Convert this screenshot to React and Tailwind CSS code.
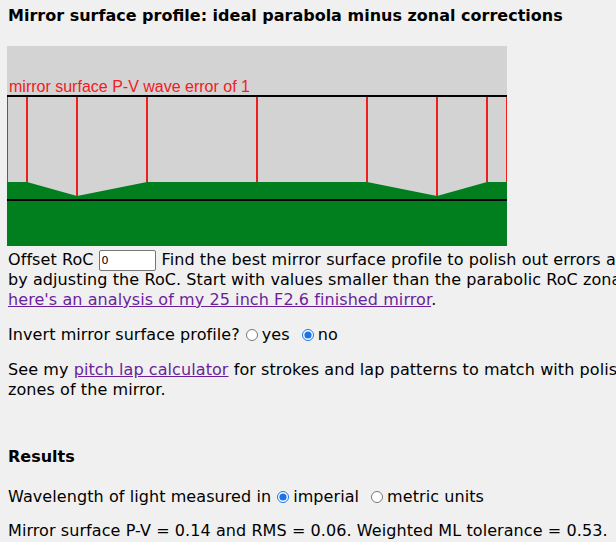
import { useState } from "react";

const lines = [0, 20, 70, 140, 250, 360, 430, 480, 500];
const dips = { 70: 150, 430: 150 };

const SurfaceChart = () => (
  <svg width="500" height="200" className="block">
    <rect x="0" y="0" width="500" height="200" fill="#d3d3d3" />
    <polygon
      points="0,136 20,136 70,150 140,136 360,136 430,150 480,136 500,136 500,200 0,200"
      fill="#017f1f"
    />
    <line x1="0" y1="50" x2="500" y2="50" stroke="#000" strokeWidth="2" />
    <line x1="0" y1="154" x2="500" y2="154" stroke="#000" strokeWidth="2" />
    {lines.map((x) => (
      <line
        key={x}
        x1={x === 0 ? 0.5 : x === 500 ? 499.5 : x}
        y1="51"
        x2={x === 0 ? 0.5 : x === 500 ? 499.5 : x}
        y2={dips[x] || 136}
        stroke="#f01d1d"
        strokeWidth={x === 0 || x === 500 ? 1 : 2}
      />
    ))}
    <text x="2" y="46" fill="#f02020" fontSize="16" fontFamily="'Liberation Sans', Arial, sans-serif">
      mirror surface P-V wave error of 1
    </text>
  </svg>
);

const Radio = ({ name, label, checked, onChange }) => (
  <label className="inline-flex items-center mr-[6px]">
    <input
      type="radio"
      name={name}
      checked={checked}
      onChange={onChange}
      className="w-[12px] h-[12px] m-0 ml-[6px] mr-[4px] accent-[#1a73e8]"
    />
    {label}
  </label>
);

export default function App() {
  const [invert, setInvert] = useState("no");
  const [units, setUnits] = useState("imperial");

  return (
    <div
      className="w-[616px] h-[542px] overflow-hidden bg-[#f0f0f0] text-black text-[16px] leading-[20px]"
      style={{ fontFamily: "'DejaVu Sans', Verdana, sans-serif" }}
    >
      <div className="px-2 w-[800px]">
        <h3 className="font-bold text-[16px] pt-[6px] pb-[20px]">
          Mirror surface profile: ideal parabola minus zonal corrections
        </h3>
        <div className="-ml-[1px]">
          <SurfaceChart />
        </div>

        <div className="tracking-[0.08px]">
          <div className="mt-[4px] whitespace-nowrap">
            <div className="flex items-center h-[20px]">
              Offset RoC
              <input
                defaultValue="0"
                className="ml-[5px] mr-[6px] w-[57px] h-[21px] bg-white border border-[#767676] rounded-[2px] px-[2px] text-[11px] leading-none"
              />
              Find the best mirror surface profile to polish out errors and
            </div>
            <div>by adjusting the RoC. Start with values smaller than the parabolic RoC zonal</div>
            <div>
              <a href="#" className="underline text-[#6b1f9c]">
                here's an analysis of my 25 inch F2.6 finished mirror
              </a>
              .
            </div>
          </div>

          <p className="mt-[15px] flex items-center">
            Invert mirror surface profile?
            <span className="inline-flex items-center">
              <Radio name="inv" label="yes" checked={invert === "yes"} onChange={() => setInvert("yes")} />
              <Radio name="inv" label="no" checked={invert === "no"} onChange={() => setInvert("no")} />
            </span>
          </p>

          <p className="mt-[15px] whitespace-nowrap">
            See my{" "}
            <a href="#" className="underline text-[#6b1f9c]">
              pitch lap calculator
            </a>{" "}
            for strokes and lap patterns to match with polishing
            <br />
            zones of the mirror.
          </p>

          <h4 className="font-bold mt-[47px] tracking-normal">Results</h4>

          <p className="mt-[20px] flex items-center">
            Wavelength of light measured in
            <span className="inline-flex items-center">
              <Radio name="units" label="imperial" checked={units === "imperial"} onChange={() => setUnits("imperial")} />
              <Radio name="units" label="metric units" checked={units === "metric"} onChange={() => setUnits("metric")} />
            </span>
          </p>

          <p className="mt-[14px] whitespace-nowrap">
            Mirror surface P-V = 0.14 and RMS = 0.06. Weighted ML tolerance = 0.53.
          </p>
        </div>
      </div>
    </div>
  );
}
